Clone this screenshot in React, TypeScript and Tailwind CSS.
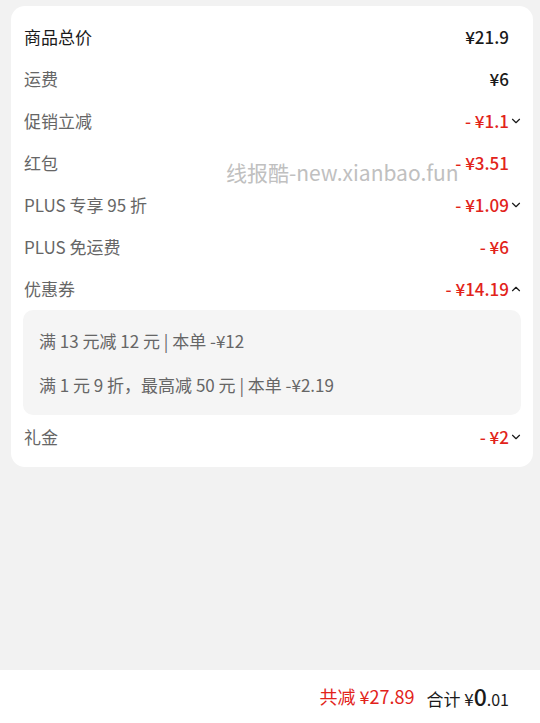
import { ChevronDown, ChevronUp } from 'lucide-react';

const FONT = { fontFamily: '"Noto Sans CJK SC", "Noto Sans", sans-serif' };

type Row = { label: string; value: string; red?: boolean; chevron?: 'down' | 'up'; strong?: boolean };

const ROWS: Row[] = [
  { label: '商品总价', value: '¥21.9', strong: true },
  { label: '运费', value: '¥6' },
  { label: '促销立减', value: '- ¥1.1', red: true, chevron: 'down' },
  { label: '红包', value: '- ¥3.51', red: true },
  { label: 'PLUS 专享 95 折', value: '- ¥1.09', red: true, chevron: 'down' },
  { label: 'PLUS 免运费', value: '- ¥6', red: true },
  { label: '优惠券', value: '- ¥14.19', red: true, chevron: 'up' },
];

function PriceRow({ row }: { row: Row }) {
  return (
    <div className="h-[42px] flex items-center justify-between pl-[13px] pr-[10px]">
      <span className={`text-[17px] ${row.strong ? 'text-[#1a1a1a]' : 'text-[#666]'}`}>{row.label}</span>
      <div className="flex items-center">
        <span className={`text-[17px] font-medium ${row.red ? 'text-[#e2231a]' : 'text-[#1a1a1a]'}`}>{row.value}</span>
        <span className="w-[14px] flex justify-center">
          {row.chevron === 'down' && <ChevronDown className="w-[14px] h-[14px] text-[#1a1a1a]" strokeWidth={2} />}
          {row.chevron === 'up' && <ChevronUp className="w-[14px] h-[14px] text-[#1a1a1a]" strokeWidth={2} />}
        </span>
      </div>
    </div>
  );
}

export default function App() {
  return (
    <div className="w-[540px] h-[723px] bg-[#f2f2f2] flex flex-col" style={FONT}>
      <div className="flex-1 px-[11px] pt-[6px] pr-[7px]">
        <div className="relative bg-white rounded-[14px] pt-[10px] pb-[9px]">
          {ROWS.map(r => <PriceRow key={r.label} row={r} />)}
          <div className="mx-[12px] bg-[#f5f5f5] rounded-[10px] h-[105px] flex flex-col justify-center gap-[19px] pl-[16px] text-[17px] text-[#666]">
            <div>满 13 元减 12 元 | 本单 -¥12</div>
            <div>满 1 元 9 折，最高减 50 元 | 本单 -¥2.19</div>
          </div>
          <div className="mt-[1px]">
            <PriceRow row={{ label: '礼金', value: '- ¥2', red: true, chevron: 'down' }} />
          </div>
          <div className="absolute left-[215px] top-[151px] text-[21px] text-[#c0c0c0] pointer-events-none">
            线报酷-new.xianbao.fun
          </div>
        </div>
      </div>
      <div className="h-[53px] bg-white flex items-center justify-end pr-[31px] gap-[12px]">
        <span className="text-[18px] text-[#e2231a]">共减 ¥27.89</span>
        <span className="text-[17px] text-[#1a1a1a] flex items-baseline">
          合计 ¥<span className="text-[23px] font-medium">0</span><span className="text-[16px]">.01</span>
        </span>
      </div>
    </div>
  );
}
